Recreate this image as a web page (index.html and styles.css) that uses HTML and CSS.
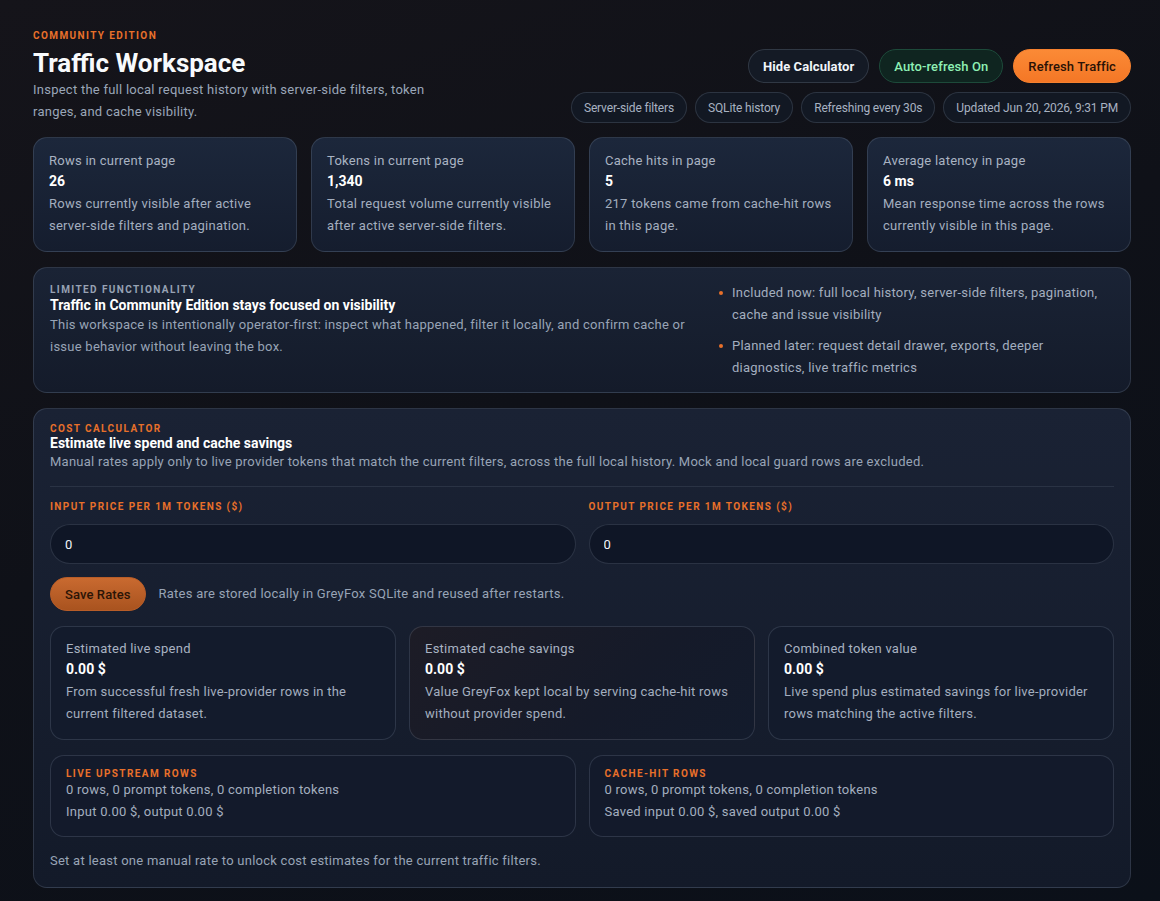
FILE: index.html
```html
<!DOCTYPE html>
<html lang="en">
  <head>
    <meta charset="UTF-8" />
    <title>Traffic Workspace</title>
    <meta name="viewport" content="width=device-width, initial-scale=1.0" />
    <link rel="stylesheet" href="styles.css">
  </head>
  <body>
    <main class="page">
      <header class="hero">
        <div class="hero-copy">
          <p class="eyebrow">Community Edition</p>
          <h1>Traffic Workspace</h1>
          <p class="lead">Inspect the full local request history with server-side filters, token ranges, and cache visibility.</p>
        </div>
        <div class="hero-side">
          <div class="actions">
            <button class="btn">Hide Calculator</button>
            <button class="btn btn-live">Auto-refresh On</button>
            <button class="btn btn-primary">Refresh Traffic</button>
          </div>
          <div class="pills">
            <span class="pill">Server-side filters</span>
            <span class="pill">SQLite history</span>
            <span class="pill">Refreshing every 30s</span>
            <span class="pill">Updated Jun 20, 2026, 9:31 PM</span>
          </div>
        </div>
      </header>

      <section class="stats">
        <div class="card stat">
          <p class="stat-label">Rows in current page</p>
          <p class="stat-value">26</p>
          <p class="stat-note">Rows currently visible after active server-side filters and pagination.</p>
        </div>
        <div class="card stat">
          <p class="stat-label">Tokens in current page</p>
          <p class="stat-value">1,340</p>
          <p class="stat-note">Total request volume currently visible after active server-side filters.</p>
        </div>
        <div class="card stat">
          <p class="stat-label">Cache hits in page</p>
          <p class="stat-value">5</p>
          <p class="stat-note">217 tokens came from cache-hit rows in this page.</p>
        </div>
        <div class="card stat">
          <p class="stat-label">Average latency in page</p>
          <p class="stat-value">6 ms</p>
          <p class="stat-note">Mean response time across the rows currently visible in this page.</p>
        </div>
      </section>

      <section class="panel notice">
        <div class="notice-copy">
          <p class="eyebrow muted">Limited functionality</p>
          <h2>Traffic in Community Edition stays focused on visibility</h2>
          <p class="body">This workspace is intentionally operator-first: inspect what happened, filter it locally, and confirm cache or issue behavior without leaving the box.</p>
        </div>
        <ul class="plan">
          <li>Included now: full local history, server-side filters, pagination, cache and issue visibility</li>
          <li>Planned later: request detail drawer, exports, deeper diagnostics, live traffic metrics</li>
        </ul>
      </section>

      <section class="panel calc">
        <div class="calc-head">
          <p class="eyebrow">Cost calculator</p>
          <h2>Estimate live spend and cache savings</h2>
          <p class="body">Manual rates apply only to live provider tokens that match the current filters, across the full local history. Mock and local guard rows are excluded.</p>
        </div>

        <div class="rates">
          <label class="field">
            <span class="field-label">Input price per 1M tokens ($)</span>
            <input type="text" value="0" />
          </label>
          <label class="field">
            <span class="field-label">Output price per 1M tokens ($)</span>
            <input type="text" value="0" />
          </label>
        </div>

        <div class="save-row">
          <button class="btn btn-save">Save Rates</button>
          <p class="body">Rates are stored locally in GreyFox SQLite and reused after restarts.</p>
        </div>

        <div class="results">
          <div class="card result">
            <p class="stat-label">Estimated live spend</p>
            <p class="stat-value">0.00 $</p>
            <p class="stat-note">From successful fresh live-provider rows in the current filtered dataset.</p>
          </div>
          <div class="card result warm">
            <p class="stat-label">Estimated cache savings</p>
            <p class="stat-value">0.00 $</p>
            <p class="stat-note">Value GreyFox kept local by serving cache-hit rows without provider spend.</p>
          </div>
          <div class="card result">
            <p class="stat-label">Combined token value</p>
            <p class="stat-value">0.00 $</p>
            <p class="stat-note">Live spend plus estimated savings for live-provider rows matching the active filters.</p>
          </div>
        </div>

        <div class="breakdown">
          <div class="card split">
            <p class="eyebrow">Live upstream rows</p>
            <p class="split-line">0 rows, 0 prompt tokens, 0 completion tokens</p>
            <p class="split-line">Input 0.00 $, output 0.00 $</p>
          </div>
          <div class="card split">
            <p class="eyebrow">Cache-hit rows</p>
            <p class="split-line">0 rows, 0 prompt tokens, 0 completion tokens</p>
            <p class="split-line">Saved input 0.00 $, saved output 0.00 $</p>
          </div>
        </div>

        <p class="body foot">Set at least one manual rate to unlock cost estimates for the current traffic filters.</p>
      </section>
    </main>
  </body>
</html>
```

FILE: styles.css
```css
* {
  box-sizing: border-box;
}

html,
body {
  margin: 0;
  padding: 0;
  min-height: 100%;
}

body {
  font-family: "Roboto", "Lato", sans-serif;
  font-size: 13px;
  letter-spacing: 0.25px;
  color: #9aa6b8;
  background: linear-gradient(160deg, #15141a 0%, #0f1118 45%, #0b1019 100%);
  min-height: 901px;
}

p,
h1,
h2,
ul {
  margin: 0;
}

.page {
  display: flex;
  flex-direction: column;
  gap: 14px;
  width: 1098px;
  margin-left: 33px;
  padding: 30px 0 14px;
}

/* header */

.hero {
  display: flex;
  justify-content: space-between;
  align-items: flex-end;
}

.eyebrow {
  font-size: 10px;
  line-height: 12px;
  font-weight: 700;
  letter-spacing: 1.4px;
  text-transform: uppercase;
  color: #e8702a;
}

.eyebrow.muted {
  color: #97a2b3;
}

h1 {
  margin-top: 5px;
  font-size: 26px;
  line-height: 32px;
  font-weight: 700;
  letter-spacing: 0;
  color: #f8fafc;
}

.lead {
  max-width: 410px;
  line-height: 22px;
}

.hero-side {
  display: flex;
  flex-direction: column;
  align-items: flex-end;
  gap: 9px;
}

.actions {
  display: flex;
  gap: 10px;
}

.pills {
  display: flex;
  gap: 8px;
}

.btn {
  height: 34px;
  padding: 0 14px;
  border-radius: 999px;
  border: 1px solid rgba(148, 163, 184, 0.22);
  background: #141a25;
  color: #f1f5f9;
  font-family: inherit;
  font-size: 13px;
  font-weight: 700;
  letter-spacing: 0.1px;
  cursor: pointer;
}

.btn-live {
  background: #0f2520;
  border-color: #1d4a3a;
  color: #8ef0b4;
  font-weight: 500;
}

.btn-primary {
  background: linear-gradient(180deg, #fb8a36, #f47726);
  border-color: #f6812f;
  color: #2a1206;
  font-weight: 500;
}

.pill {
  display: inline-flex;
  align-items: center;
  height: 31px;
  padding: 0 12px;
  border-radius: 999px;
  border: 1px solid rgba(148, 163, 184, 0.2);
  background: #121823;
  color: #a8b2c1;
  font-size: 12px;
  letter-spacing: -0.15px;
}

/* cards */

.card {
  border: 1px solid rgba(148, 163, 184, 0.2);
  border-radius: 14px;
}

.stats {
  display: grid;
  grid-template-columns: repeat(4, 1fr);
  gap: 14px;
}

.stat {
  padding: 14px 15px 14px;
  background: linear-gradient(180deg, #1c273b 0%, #151d2e 100%);
}

.stat-label {
  line-height: 18px;
  color: #a9b3c2;
}

.stat-value {
  margin-top: 1px;
  font-size: 14px;
  line-height: 20px;
  font-weight: 700;
  letter-spacing: 0;
  color: #ffffff;
}

.stat-note {
  margin-top: 2px;
  line-height: 22px;
  color: #a3aebf;
}

.panel {
  border: 1px solid rgba(148, 163, 184, 0.2);
  border-radius: 14px;
  padding: 16px;
  background: linear-gradient(180deg, #1a2335 0%, #141b2a 100%);
}

h2 {
  font-size: 14px;
  line-height: 18px;
  font-weight: 700;
  letter-spacing: 0;
  color: #ffffff;
}

.body {
  line-height: 22px;
  color: #98a4b6;
}

/* limited functionality notice */

.notice {
  display: grid;
  grid-template-columns: 1fr 396px;
  gap: 20px;
  padding-top: 14px;
  padding-bottom: 13px;
  margin-top: 1px;
}

.notice-copy {
  padding-top: 2px;
}

.plan {
  list-style: none;
  padding: 0;
  display: flex;
  flex-direction: column;
  gap: 9px;
}

.plan li {
  position: relative;
  padding-left: 14px;
  line-height: 22px;
  color: #a3aebf;
}

.plan li::before {
  content: "";
  position: absolute;
  left: 1px;
  top: 9px;
  width: 4px;
  height: 4px;
  border-radius: 50%;
  background: #e8702a;
}

/* cost calculator */

.calc {
  margin-top: 1px;
  padding-top: 14px;
  padding-bottom: 15px;
  background: linear-gradient(180deg, #1a2234 0%, #131a29 100%);
}

.calc-head {
  padding-bottom: 15px;
  border-bottom: 1px solid rgba(148, 163, 184, 0.14);
}

.calc-head h2 {
  line-height: 17px;
}

.calc-head .body {
  margin-top: 1px;
  line-height: 18px;
}

.rates {
  display: grid;
  grid-template-columns: 1fr 1fr;
  gap: 13px;
  margin-top: 14px;
}

.field {
  display: flex;
  flex-direction: column;
  gap: 11px;
}

.field-label {
  font-size: 10px;
  line-height: 12px;
  font-weight: 700;
  letter-spacing: 1.4px;
  text-transform: uppercase;
  color: #e8702a;
}

.field input {
  height: 40px;
  padding: 0 14px;
  border-radius: 999px;
  border: 1px solid rgba(148, 163, 184, 0.2);
  background: #0f1626;
  color: #f1f5f9;
  font-family: inherit;
  font-size: 13px;
  outline: none;
}

.save-row {
  display: flex;
  align-items: center;
  gap: 13px;
  margin-top: 13px;
}

.btn-save {
  background: linear-gradient(180deg, #c96a30, #a9531f);
  border-color: #b85d28;
  color: #2b1406;
  font-weight: 500;
}

.results {
  display: grid;
  grid-template-columns: repeat(3, 1fr);
  gap: 13px;
  margin-top: 15px;
}

.result {
  padding: 13px 15px 14px;
  background: #131b2c;
}

.result.warm {
  background: linear-gradient(135deg, #1d1c26 0%, #151a29 60%, #131b2c 100%);
}

.breakdown {
  display: grid;
  grid-template-columns: 1fr 1fr;
  gap: 13px;
  margin-top: 15px;
}

.split {
  padding: 12px 15px 14px;
  background: #131a2b;
}

.split-line {
  line-height: 20px;
  color: #a3aebf;
}

.split-line + .split-line {
  margin-top: 2px;
}

.foot {
  margin-top: 13px;
}
```
